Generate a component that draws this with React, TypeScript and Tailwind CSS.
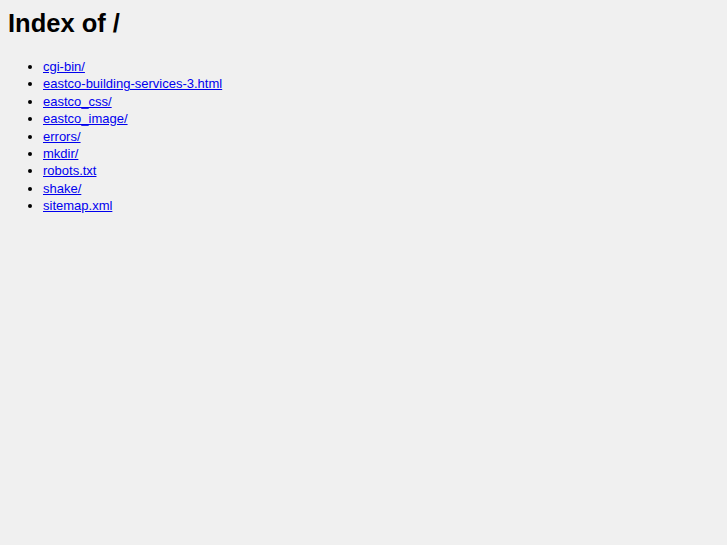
import React from 'react';

const entries = [
    'cgi-bin/',
    'eastco-building-services-3.html',
    'eastco_css/',
    'eastco_image/',
    'errors/',
    'mkdir/',
    'robots.txt',
    'shake/',
    'sitemap.xml',
];

const App: React.FC = () => {
    return (
        <div className="min-h-[545px] bg-[#f0f0f0] px-2 pt-[9px] font-['Liberation_Sans',Arial,sans-serif] text-black">
            <h1 className="text-[25.5px] font-bold leading-[29px]">Index of /</h1>
            <ul className="mt-[20px] list-disc pl-[35px] text-[13px] leading-[17.4px]">
                {entries.map(name => (
                    <li key={name}>
                        <a href={name} className="text-[#0000ee] underline">{name}</a>
                    </li>
                ))}
            </ul>
        </div>
    );
};

export default App;
